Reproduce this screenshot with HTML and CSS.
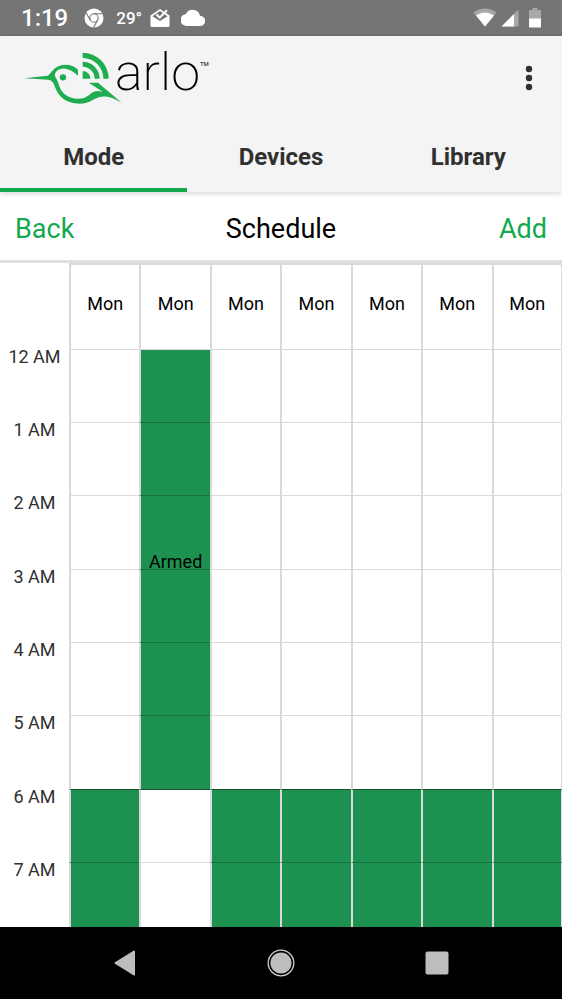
FILE: index.html
```html
<!DOCTYPE html>
<html lang="en">
<head>
<meta charset="utf-8">
<meta name="viewport" content="width=device-width, initial-scale=1">
<title>Arlo Schedule</title>
<link rel="stylesheet" href="styles.css">
</head>
<body>
<div class="status-bar">
  <div class="status-left">
    <span class="clock">1:19</span>
    <svg class="status-chrome" width="20" height="20" viewBox="0 0 20 20" aria-hidden="true">
      <circle cx="10" cy="10" r="9.5" fill="#fff"/>
      <circle cx="10" cy="10" r="4.2" fill="#fff" stroke="#757575" stroke-width="1.1"/>
      <path d="M10 5.8H18.4M6.4 12.1 2 4.8M13.6 12.1 9.6 19.4" stroke="#757575" stroke-width="1.1" fill="none"/>
    </svg>
    <span class="temperature">29°</span>
    <svg class="status-mail" width="20" height="20" viewBox="0 0 20 20" aria-hidden="true">
      <path d="M0.5 7.5 10 1l9.5 6.500V17.500a1.500 1.500 0 0 1-1.500 1.500H2A1.500 1.500 0 0 1 .5 17.500Z" fill="#fff"/>
      <path d="M2.500 8.300 10 3l7.500 5.300L10 13Z" fill="#757575"/>
      <path d="m6.500 6.500 3.200 3.200L17 2.200" stroke="#fff" stroke-width="2" fill="none"/>
    </svg>
    <svg class="status-cloud" width="24" height="18" viewBox="0 0 24 18" aria-hidden="true">
      <path d="M19 6.700A7.500 7.500 0 0 0 5 4.900 6 6 0 0 0 6 17h13a5 5 0 0 0 0-10.300Z" fill="#fff"/>
    </svg>
  </div>
  <div class="status-right">
    <svg width="24" height="20" viewBox="0 0 24 20" aria-hidden="true">
      <path d="M0.500 4.500Q12-3.500 23.500 4.500L12 18.500Z" fill="#a8a8a8"/>
      <path d="M3 7.500Q12 1.500 21 7.500L12 18.500Z" fill="#fff"/>
    </svg>
    <svg width="18" height="20" viewBox="0 0 18 20" aria-hidden="true">
      <path d="M17.500 1.500V18.500H0.500Z" fill="#a8a8a8"/>
      <path d="M13 6V18.500H0.500Z" fill="#fff"/>
    </svg>
    <svg class="status-battery" width="12" height="20" viewBox="0 0 12 20" aria-hidden="true">
      <path d="M3.500 0h5v2H11q1 0 1 1v8H0V3q0-1 1-1h2.500Z" fill="#a8a8a8"/>
      <path d="M0 10.500h12V18.500q0 1-1 1H1q-1 0-1-1Z" fill="#fff"/>
    </svg>
  </div>
</div>

<header class="app-header">
  <div class="app-bar">
    <div class="brand">
      <svg class="bird" width="98" height="52" viewBox="27 34 294 156" aria-hidden="true">
        <g fill="#20ad50">
          <path d="M27 113 98 105C111 98 116 73 152 72Q174 72 189 87V105Q168 86 151 84C130 82 115 96 121 109C133 125 130 143 148 160C164 174 190 178 209 171C228 163 229 151 248 151L263 153 221 126H249L320 186C294 173 284 166 260 168C236 170 228 189 193 189C156 188 135 170 125 150C117 134 117 120 100 117Z"/>
          <circle cx="144" cy="110" r="9.500"/>
          <path d="M203 36A78 78 0 0 1 281 114H265A62 62 0 0 0 203 52Z"/>
          <path d="M203 63A51 51 0 0 1 254 114H239A36 36 0 0 0 203 78Z"/>
          <path d="M203 91A23 23 0 0 1 226 114H203Z"/>
        </g>
      </svg>
      <span class="wordmark">arlo</span><span class="trademark">TM</span>
    </div>
    <button class="more" type="button" aria-label="More options">
      <svg width="8" height="26" viewBox="0 0 8 26" aria-hidden="true">
        <g fill="#303030"><circle cx="4" cy="4" r="3.200"/><circle cx="4" cy="13" r="3.200"/><circle cx="4" cy="22" r="3.200"/></g>
      </svg>
    </button>
  </div>
  <nav class="tabs">
    <a class="tab tab-active" href="#mode">Mode</a>
    <a class="tab" href="#devices">Devices</a>
    <a class="tab" href="#library">Library</a>
  </nav>
</header>

<div class="toolbar">
  <button class="action" type="button">Back</button>
  <h1 class="title">Schedule</h1>
  <button class="action action-end" type="button">Add</button>
</div>

<main class="schedule">
  <table class="week">
    <thead>
      <tr><td class="corner"></td><th scope="col">Mon</th><th scope="col">Mon</th><th scope="col">Mon</th><th scope="col">Mon</th><th scope="col">Mon</th><th scope="col">Mon</th><th scope="col">Mon</th></tr>
    </thead>
    <tbody>
      <tr><th scope="row">12 AM</th><td></td><td class="armed armed-start"></td><td></td><td></td><td></td><td></td><td></td></tr>
      <tr><th scope="row">1 AM</th><td></td><td class="armed"></td><td></td><td></td><td></td><td></td><td></td></tr>
      <tr><th scope="row">2 AM</th><td></td><td class="armed">Armed</td><td></td><td></td><td></td><td></td><td></td></tr>
      <tr><th scope="row">3 AM</th><td></td><td class="armed"></td><td></td><td></td><td></td><td></td><td></td></tr>
      <tr><th scope="row">4 AM</th><td></td><td class="armed"></td><td></td><td></td><td></td><td></td><td></td></tr>
      <tr><th scope="row">5 AM</th><td></td><td class="armed"></td><td></td><td></td><td></td><td></td><td></td></tr>
      <tr class="boundary"><th scope="row">6 AM</th><td class="armed"></td><td class="armed-end"></td><td class="armed"></td><td class="armed"></td><td class="armed"></td><td class="armed"></td><td class="armed"></td></tr>
      <tr><th scope="row">7 AM</th><td class="armed"></td><td></td><td class="armed"></td><td class="armed"></td><td class="armed"></td><td class="armed"></td><td class="armed"></td></tr>
    </tbody>
  </table>
</main>

<div class="system-nav">
  <button type="button" aria-label="Back">
    <svg width="22" height="26" viewBox="0 0 22 26" aria-hidden="true"><path d="M20 1.500 1.500 13 20 24.500Z" fill="#bdbdbd" stroke="#bdbdbd" stroke-width="2" stroke-linejoin="round"/></svg>
  </button>
  <button type="button" aria-label="Home">
    <svg width="28" height="28" viewBox="0 0 28 28" aria-hidden="true"><circle cx="14" cy="14" r="12.800" fill="none" stroke="#d0d0d0" stroke-width="1.300"/><circle cx="14" cy="14" r="10.600" fill="#bdbdbd"/></svg>
  </button>
  <button type="button" aria-label="Recent apps">
    <svg width="24" height="24" viewBox="0 0 24 24" aria-hidden="true"><rect x="0.500" y="0.500" width="23" height="23" rx="2" fill="#bdbdbd"/></svg>
  </button>
</div>
</body>
</html>
```
FILE: styles.css
```css
* {
  box-sizing: border-box;
}

body {
  margin: 0;
  height: 100vh;
  display: flex;
  flex-direction: column;
  background: #fff;
  color: #000;
  font-family: Roboto, "Liberation Sans", sans-serif;
}

button {
  border: 0;
  padding: 0;
  background: none;
  font: inherit;
  color: inherit;
}

svg {
  display: block;
  flex: none;
}

.status-bar {
  flex: none;
  height: 36px;
  padding: 0 21px;
  display: flex;
  align-items: center;
  justify-content: space-between;
  background: #757575;
  color: #fff;
}

.status-left {
  display: flex;
  align-items: center;
}

.status-right {
  display: flex;
  align-items: center;
  gap: 4px;
}

.status-battery {
  margin-left: 6px;
}

.clock {
  font-size: 24px;
  font-weight: 500;
}

.status-chrome {
  margin-left: 16px;
}

.temperature {
  margin-left: 12px;
  font-size: 17px;
  font-weight: 500;
}

.status-mail {
  margin-left: 8px;
}

.status-cloud {
  margin-left: 11px;
}

.app-header {
  flex: none;
  position: relative;
  background: #f4f4f4;
  box-shadow: 0 1px 6px rgba(0, 0, 0, 0.2);
}

.app-bar {
  height: 92px;
  padding: 0 21px 8px 24px;
  display: flex;
  align-items: center;
  justify-content: space-between;
}

.brand {
  display: flex;
  align-items: center;
  height: 80px;
}

.wordmark {
  margin: -10px 0 0 -7px;
  font-size: 52px;
  font-weight: 200;
  line-height: 60px;
}

.trademark {
  align-self: flex-start;
  margin-top: 22px;
  font-size: 6px;
  line-height: 8px;
}

.more {
  width: 24px;
  height: 48px;
  display: flex;
  align-items: center;
  justify-content: center;
}

.tabs {
  display: grid;
  grid-template-columns: repeat(3, 1fr);
}

.tab {
  height: 64px;
  border-bottom: 4px solid transparent;
  color: #303030;
  font-size: 24px;
  font-weight: 700;
  line-height: 58px;
  text-align: center;
  text-decoration: none;
}

.tab-active {
  border-bottom-color: #12a84d;
}

.toolbar {
  flex: none;
  height: 71px;
  padding: 6px 15px 0;
  display: grid;
  grid-template-columns: 1fr auto 1fr;
  align-items: center;
  border-bottom: 3px solid #e0e0e0;
  font-size: 27px;
}

.action {
  color: #12a84d;
  text-align: left;
}

.action-end {
  text-align: right;
}

.title {
  margin: 0;
  font-size: 27px;
  font-weight: 400;
}

.schedule {
  flex: 1;
  min-height: 0;
  overflow: hidden;
}

.week {
  width: 100%;
  table-layout: fixed;
  border-collapse: separate;
  border-spacing: 0;
  font-size: 18px;
}

.week th,
.week td {
  padding: 0;
  font-weight: 400;
}

.week .corner {
  width: 69px;
  border: 0;
}

.week thead th {
  height: 86px;
  padding-bottom: 8px;
  border: solid #d9d9db;
  border-width: 2px 0 0 2px;
}

.week tbody tr {
  height: 73px;
}

.week tbody tr:nth-child(3n) {
  height: 74px;
}

.week tbody th {
  color: #303030;
  line-height: 16px;
  vertical-align: top;
}

.week tbody td {
  border: solid #d9d9db;
  border-width: 1px 0 0 2px;
  line-height: 14px;
  text-align: center;
  vertical-align: bottom;
  white-space: nowrap;
}

.week tbody .armed {
  border-top-color: rgba(0, 0, 0, 0.22);
  background: #1d9250;
}

.week tbody .armed-start {
  border-top-color: #d9d9db;
}

.week .boundary .armed,
.week .boundary .armed-end {
  border-top-color: #14522f;
}

.week tr > :last-child,
.week thead tr > :last-child,
.week tbody td:last-child {
  border-right-width: 1px;
}

.system-nav {
  flex: none;
  height: 72px;
  padding: 0 47px;
  display: grid;
  grid-template-columns: repeat(3, 1fr);
  background: #000;
}

.system-nav button {
  display: flex;
  align-items: center;
  justify-content: center;
}
```
